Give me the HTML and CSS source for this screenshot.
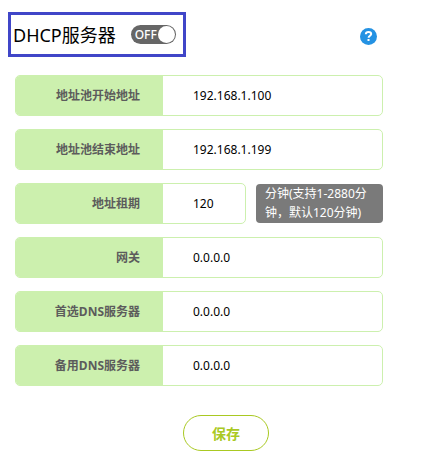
FILE: index.html
```
<!DOCTYPE html>
<html lang="zh-CN">
<head>
    <meta charset="UTF-8">
    <title>DHCP服务器</title>
    <link rel="stylesheet" href="styles.css">
</head>
<body>
    <div class="main-wrapper">
        <div class="header">
            <div class="title-box">
                <label class="title" for="dhcp">DHCP服务器</label>
                <label class="switch">
                    <input class="switch-input" type="checkbox" id="dhcp">
                    <span class="switch-text">OFF</span>
                    <span class="switch-knob"></span>
                </label>
            </div>
            <button class="help" type="button" aria-label="帮助">
                <svg width="17" height="17" viewBox="0 0 17 17">
                    <circle cx="8.5" cy="8.5" r="8.5" fill="#2492e3"/>
                    <path d="M5.8 6.2C5.9 4.6 7 4 8.5 4s2.7.7 2.7 2.1c0 1.7-2.6 1.6-2.6 3.7" fill="none" stroke="#fff" stroke-width="2"/>
                    <rect x="7.5" y="11" width="2" height="2" fill="#fff"/>
                </svg>
            </button>
        </div>

        <form class="form">
            <div class="row">
                <div class="field">
                    <label class="name" for="start">地址池开始地址</label>
                    <input class="value" type="text" id="start" value="192.168.1.100">
                </div>
            </div>
            <div class="row">
                <div class="field">
                    <label class="name" for="end">地址池结束地址</label>
                    <input class="value" type="text" id="end" value="192.168.1.199">
                </div>
            </div>
            <div class="row">
                <div class="field">
                    <label class="name" for="lease">地址租期</label>
                    <input class="value" type="text" id="lease" value="120">
                </div>
                <div class="tip">分钟(支持1-2880分钟，默认120分钟)</div>
            </div>
            <div class="row">
                <div class="field">
                    <label class="name" for="gateway">网关</label>
                    <input class="value" type="text" id="gateway" value="0.0.0.0">
                </div>
            </div>
            <div class="row">
                <div class="field">
                    <label class="name" for="dns1">首选DNS服务器</label>
                    <input class="value" type="text" id="dns1" value="0.0.0.0">
                </div>
            </div>
            <div class="row">
                <div class="field">
                    <label class="name" for="dns2">备用DNS服务器</label>
                    <input class="value" type="text" id="dns2" value="0.0.0.0">
                </div>
            </div>
            <div class="actions">
                <button class="save" type="button">保存</button>
            </div>
        </form>
    </div>
</body>
</html>
```

FILE: styles.css
```
* {
    box-sizing: border-box;
}

body {
    margin: 0;
    background: #fff;
    color: #000;
    font-family: "Noto Sans", "Noto Sans CJK SC", sans-serif;
    font-size: 12px;
}

button, input {
    font-family: inherit;
}

.main-wrapper {
    padding: 12px 52px 6px 8px;
}

.header {
    display: flex;
    align-items: center;
    justify-content: space-between;
    padding-right: 6px;
}

.title-box {
    display: flex;
    align-items: center;
    gap: 15px;
    height: 45px;
    padding: 0 7px 0 2px;
    border: 3px solid #4046c8;
}

.title {
    font-size: 18px;
    line-height: 24px;
}

/* 开关 */
.switch {
    display: flex;
    align-items: center;
    justify-content: space-between;
    width: 45px;
    height: 19px;
    padding: 0 1px 0 3px;
    border-radius: 10px;
    background: #666;
    color: #fff;
}

.switch-input {
    appearance: none;
    width: 0;
    height: 0;
    margin: 0;
}

.switch-text {
    font-size: 12px;
    font-weight: 500;
    line-height: 19px;
}

.switch-knob {
    width: 17px;
    height: 17px;
    border-radius: 50%;
    background: #fff;
}

.help {
    display: flex;
    margin-top: 3px;
    padding: 0;
    border: none;
    background: none;
}

.form {
    display: flex;
    flex-direction: column;
    gap: 13px;
    margin: 18px 0 0 7px;
}

.row {
    display: flex;
    align-items: center;
    gap: 10px;
}

.field {
    display: flex;
    flex: 1;
    min-width: 0;
    height: 41px;
    border: 1px solid #ccf0ae;
    border-radius: 5px;
    background: #fff;
    overflow: hidden;
}

.name {
    flex: none;
    width: 147px;
    padding-right: 23px;
    background: #ccf0ae;
    color: #5c5c5c;
    font-weight: bold;
    line-height: 39px;
    text-align: right;
}

.value {
    flex: 1;
    min-width: 0;
    padding: 0 0 0 30px;
    border: none;
    outline: none;
    background: none;
    color: #000;
    font-size: 12px;
}

.tip {
    width: 127px;
    padding: 0 9px 1px;
    border-radius: 4px;
    background: #7a7a7a;
    color: #fff;
    line-height: 19px;
}

.actions {
    display: flex;
    justify-content: center;
    margin-top: 16px;
    padding-left: 54px;
}

.save {
    width: 86px;
    height: 36px;
    padding: 0;
    border: 1px solid #a9c922;
    border-radius: 18px;
    background: #fff;
    color: #a9c922;
    font-size: 14px;
    font-weight: bold;
}
```
